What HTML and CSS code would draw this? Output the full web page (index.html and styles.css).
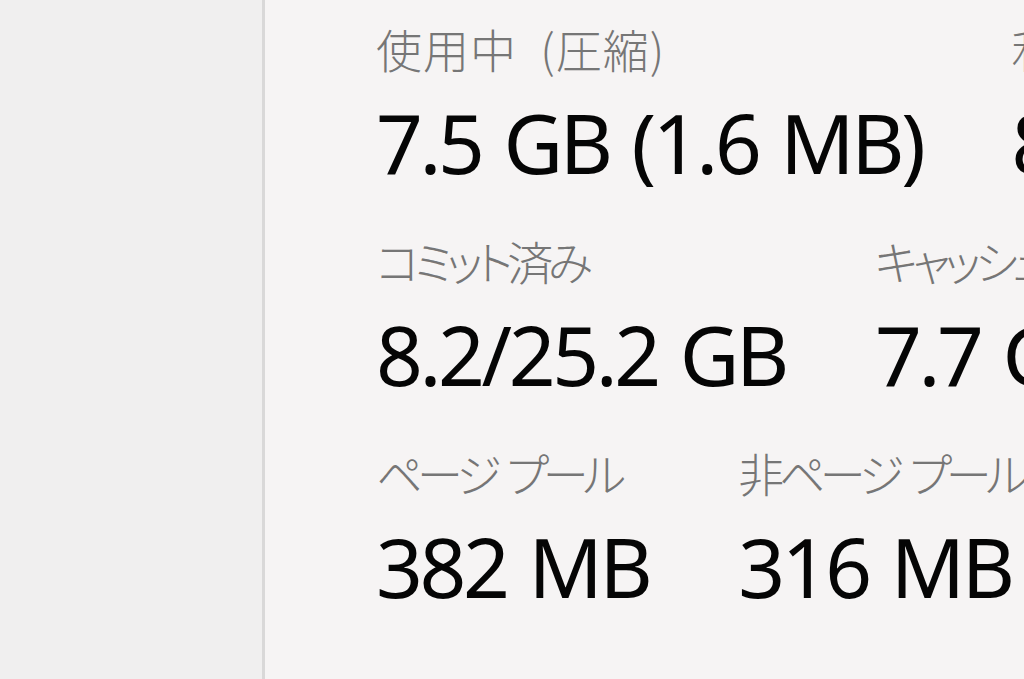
FILE: index.html
```html
<!DOCTYPE html>
<html lang="ja">
<head>
<meta charset="utf-8">
<title>メモリ</title>
<link rel="stylesheet" href="styles.css">
</head>
<body>
<div class="app">
  <aside class="sidebar"></aside>
  <main class="content">
    <div class="row">
      <div class="stat">
        <div class="label label--kanji">使用中 (圧縮)</div>
        <div class="value">7.5 GB (1.6 MB)</div>
      </div>
      <div class="stat">
        <div class="label label--kanji">利用可能</div>
        <div class="value">8.2 GB</div>
      </div>
    </div>
    <div class="row">
      <div class="stat">
        <div class="label">コミット済み</div>
        <div class="value">8.2/25.2 GB</div>
      </div>
      <div class="stat">
        <div class="label">キャッシュ済み</div>
        <div class="value">7.7 GB</div>
      </div>
    </div>
    <div class="row">
      <div class="stat">
        <div class="label">ページ プール</div>
        <div class="value">382 MB</div>
      </div>
      <div class="stat">
        <div class="label">非ページ プール</div>
        <div class="value">316 MB</div>
      </div>
    </div>
  </main>
</div>
</body>
</html>
```
FILE: styles.css
```css
html, body {
  margin: 0;
  padding: 0;
  width: 1024px;
  height: 679px;
  overflow: hidden;
}
.app {
  display: flex;
  width: 1024px;
  height: 679px;
}
.sidebar {
  flex: 0 0 262px;
  background: #f0efef;
  border-right: 3px solid #d9d8d8;
}
.content {
  flex: 1;
  min-width: 0;
  background: #f6f4f4;
  padding: 18px 0 0 111px;
  overflow: hidden;
  display: flex;
  flex-direction: column;
  gap: 38px;
}
.row {
  display: flex;
  gap: 89px;
  white-space: nowrap;
}
.stat {
  display: flex;
  flex-direction: column;
  gap: 14px;
  flex-shrink: 0;
}
.label {
  font-family: "Noto Sans CJK JP", "Noto Sans", sans-serif;
  font-feature-settings: "palt";
  font-weight: 300;
  font-size: 46px;
  line-height: 60px;
  letter-spacing: -5.5px;
  word-spacing: 6px;
  color: #767676;
}
.label--kanji {
  letter-spacing: 1px;
  word-spacing: 12px;
}
.value {
  font-family: "Noto Sans", "Open Sans", sans-serif;
  font-size: 82px;
  line-height: 100px;
  letter-spacing: -3.4px;
  word-spacing: 4px;
  color: #050505;
}
```
